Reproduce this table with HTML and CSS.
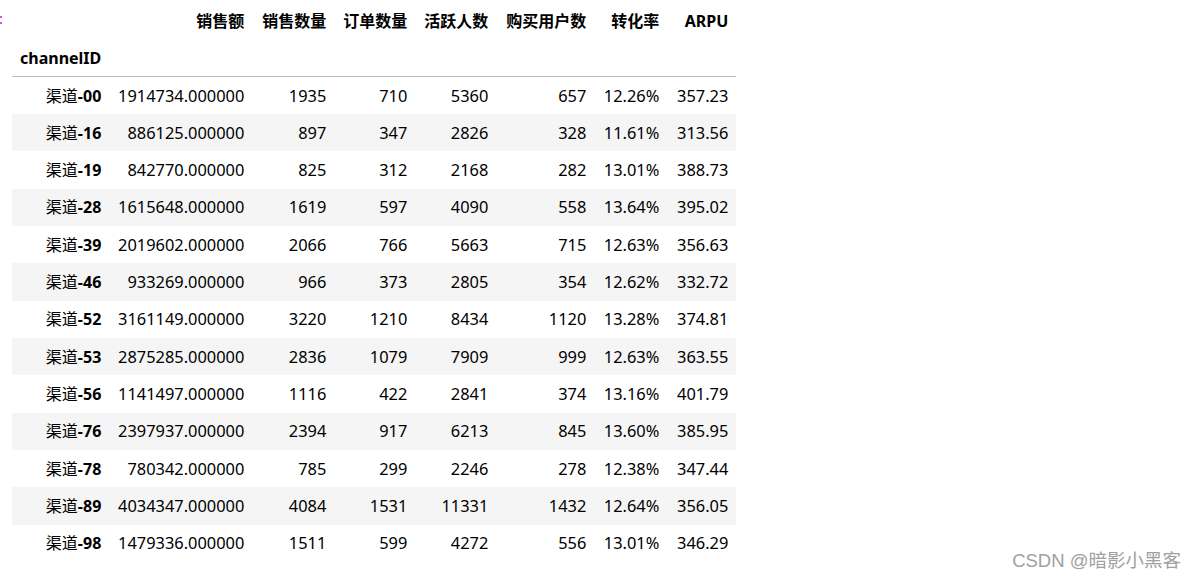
FILE: index.html
```html
<!DOCTYPE html>
<html>
<head>
<meta charset="utf-8">
<link rel="stylesheet" href="styles.css">
</head>
<body>
<div class="prompt"></div>
<table class="df">
  <thead>
    <tr class="cols">
      <th></th><th>销售额</th><th>销售数量</th><th>订单数量</th><th>活跃人数</th><th>购买用户数</th><th>转化率</th><th>ARPU</th>
    </tr>
    <tr class="idxname">
      <th class="left">channelID</th><th></th><th></th><th></th><th></th><th></th><th></th><th></th>
    </tr>
  </thead>
  <tbody>
    <tr><th><span class="cj">渠道</span>-00</th><td>1914734.000000</td><td>1935</td><td>710</td><td>5360</td><td>657</td><td>12.26%</td><td>357.23</td></tr>
    <tr><th><span class="cj">渠道</span>-16</th><td>886125.000000</td><td>897</td><td>347</td><td>2826</td><td>328</td><td>11.61%</td><td>313.56</td></tr>
    <tr><th><span class="cj">渠道</span>-19</th><td>842770.000000</td><td>825</td><td>312</td><td>2168</td><td>282</td><td>13.01%</td><td>388.73</td></tr>
    <tr><th><span class="cj">渠道</span>-28</th><td>1615648.000000</td><td>1619</td><td>597</td><td>4090</td><td>558</td><td>13.64%</td><td>395.02</td></tr>
    <tr><th><span class="cj">渠道</span>-39</th><td>2019602.000000</td><td>2066</td><td>766</td><td>5663</td><td>715</td><td>12.63%</td><td>356.63</td></tr>
    <tr><th><span class="cj">渠道</span>-46</th><td>933269.000000</td><td>966</td><td>373</td><td>2805</td><td>354</td><td>12.62%</td><td>332.72</td></tr>
    <tr><th><span class="cj">渠道</span>-52</th><td>3161149.000000</td><td>3220</td><td>1210</td><td>8434</td><td>1120</td><td>13.28%</td><td>374.81</td></tr>
    <tr><th><span class="cj">渠道</span>-53</th><td>2875285.000000</td><td>2836</td><td>1079</td><td>7909</td><td>999</td><td>12.63%</td><td>363.55</td></tr>
    <tr><th><span class="cj">渠道</span>-56</th><td>1141497.000000</td><td>1116</td><td>422</td><td>2841</td><td>374</td><td>13.16%</td><td>401.79</td></tr>
    <tr><th><span class="cj">渠道</span>-76</th><td>2397937.000000</td><td>2394</td><td>917</td><td>6213</td><td>845</td><td>13.60%</td><td>385.95</td></tr>
    <tr><th><span class="cj">渠道</span>-78</th><td>780342.000000</td><td>785</td><td>299</td><td>2246</td><td>278</td><td>12.38%</td><td>347.44</td></tr>
    <tr><th><span class="cj">渠道</span>-89</th><td>4034347.000000</td><td>4084</td><td>1531</td><td>11331</td><td>1432</td><td>12.64%</td><td>356.05</td></tr>
    <tr><th><span class="cj">渠道</span>-98</th><td>1479336.000000</td><td>1511</td><td>599</td><td>4272</td><td>556</td><td>13.01%</td><td>346.29</td></tr>
  </tbody>
</table>
<div class="watermark">CSDN @暗影小黑客</div>
</body>
</html>
```

FILE: styles.css
```css
html, body {
  margin: 0;
  padding: 0;
  background: #fff;
}
body {
  position: relative;
  width: 1195px;
  height: 578px;
  overflow: hidden;
  font-family: "Noto Sans", "Open Sans", "Noto Sans CJK SC", sans-serif;
  color: #000;
}
.prompt {
  position: absolute;
  left: 0;
  top: 16px;
  width: 2px;
  height: 8px;
}
.prompt::before,
.prompt::after {
  content: "";
  position: absolute;
  left: 0;
  width: 2px;
  height: 2px;
  background: #c163c9;
}
.prompt::before { top: 0; }
.prompt::after { top: 6px; }
.df {
  margin: 2px 0 0 12px;
  border-collapse: collapse;
  border-spacing: 0;
  font-size: 16px;
}
.df th, .df td {
  height: 37.33px;
  padding: 0 8px;
  text-align: right;
  vertical-align: middle;
  white-space: nowrap;
  line-height: 20px;
  box-sizing: border-box;
}
.df td {
  font-size: 16.4px;
}
.df th {
  font-weight: bold;
}
.df th.left {
  text-align: left;
}
.df thead tr.idxname th {
  border-bottom: 1px solid #bdbdbd;
}
.df tbody tr:nth-child(even) {
  background: #f5f5f5;
}
.df .cj {
  font-weight: normal;
}
.df td:nth-child(2) { width: 143px; }
.df td:nth-child(3) { width: 82px; }
.df td:nth-child(4) { width: 81px; }
.df td:nth-child(5) { width: 81px; }
.df td:nth-child(6) { width: 98px; }
.df td:nth-child(7) { width: 73px; }
.df td:nth-child(8) { width: 69px; }
.watermark {
  position: absolute;
  right: 14px;
  bottom: 6px;
  font-family: "Liberation Sans", "Noto Sans CJK SC", sans-serif;
  font-size: 18.5px;
  color: #a0a0a0;
}
```
